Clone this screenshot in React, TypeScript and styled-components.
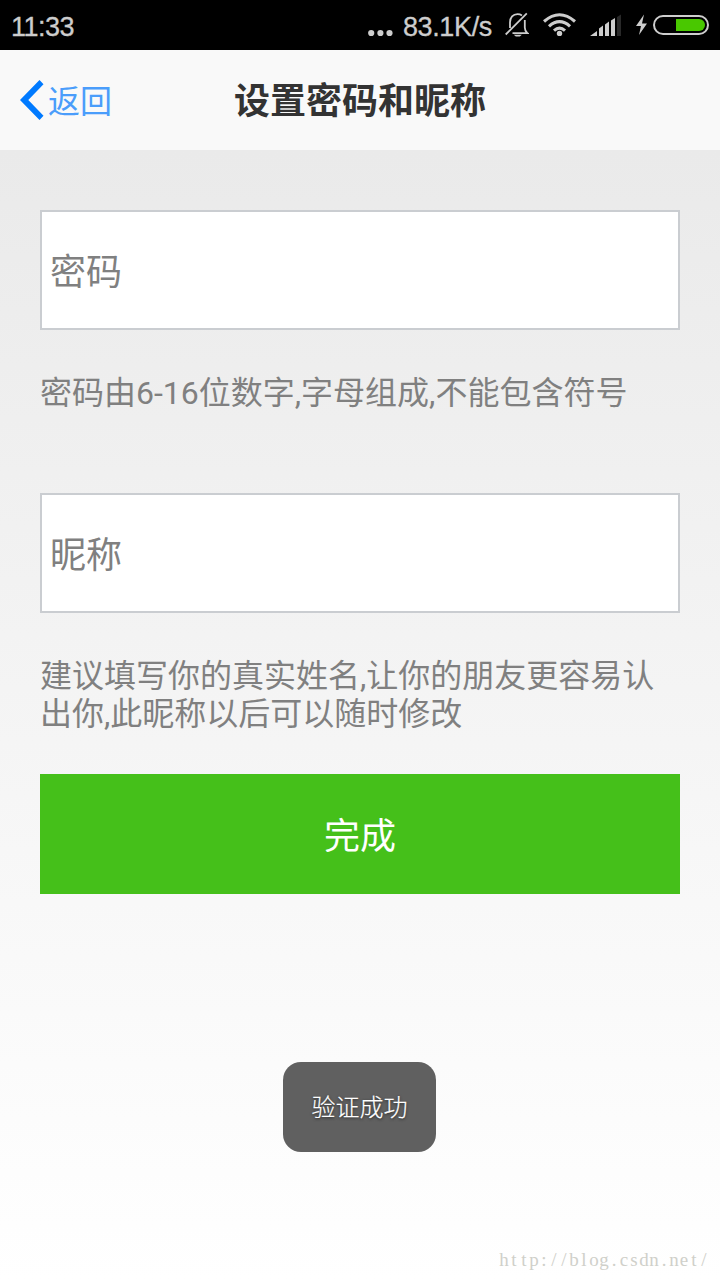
import React from "react";
import styled, { createGlobalStyle } from "styled-components";

const GlobalStyle = createGlobalStyle`
  * { box-sizing: border-box; }
  body {
    margin: 0;
    font-family: Roboto, "Noto Sans CJK SC", sans-serif;
  }
`;

const Screen = styled.div`
  position: relative;
  width: 720px;
  height: 1280px;
  overflow: hidden;
  display: flex;
  flex-direction: column;
`;

const StatusBar = styled.header`
  height: 50px;
  padding: 0 11px;
  display: flex;
  align-items: center;
  background: #000;
  color: #cdcdcd;
  font: 27px/50px "Liberation Sans", sans-serif;
  -webkit-text-stroke: 0.3px #cdcdcd;
`;

const Clock = styled.span`
  flex: 1;
  padding-top: 3px;
  letter-spacing: -0.5px;
`;

const Speed = styled.span`
  padding-top: 3px;
  margin: 0 13px 0 10px;
  letter-spacing: -0.35px;
`;

const StatusIcon = styled.svg<{ $gap?: number }>`
  display: block;
  flex: none;
  margin-right: ${({ $gap = 0 }) => $gap}px;
`;

const NavBar = styled.nav`
  height: 100px;
  padding-left: 20px;
  display: grid;
  grid-template-columns: 214px 252px 1fr;
  align-items: center;
  background: #f9f9f9;
`;

const BackButton = styled.button`
  display: flex;
  align-items: center;
  gap: 4px;
  padding: 0;
  border: 0;
  background: none;
  color: #4a9dfb;
  font: 32px/40px Roboto, "Noto Sans CJK SC", sans-serif;
`;

const BackLabel = styled.span`
  padding-top: 3px;
`;

const Title = styled.h1`
  margin: 0;
  padding-top: 3px;
  color: #333;
  font-size: 36px;
  line-height: 40px;
  font-weight: 700;
  white-space: nowrap;
`;

const Form = styled.main`
  flex: 1;
  display: flex;
  flex-direction: column;
  padding: 60px 40px 0;
  background: linear-gradient(#eaeaea, #fff);
`;

const Field = styled.input`
  display: block;
  flex: none;
  width: 100%;
  height: 120px;
  padding: 5px 8px 0;
  border: 2px solid #cacdd1;
  border-radius: 0;
  outline: 0;
  background: #fff;
  color: #333;
  font: 36px Roboto, "Noto Sans CJK SC", sans-serif;
  &::placeholder {
    color: #808080;
    opacity: 1;
  }
`;

const Hint = styled.p<{ $after: number }>`
  margin: 44px 0 ${({ $after }) => $after}px;
  color: #808080;
  font-size: 32px;
  line-height: 38px;
  white-space: nowrap;
`;

const Submit = styled.button`
  flex: none;
  height: 120px;
  padding: 0 0 2px;
  border: 0;
  background: #45c01a;
  color: #fff;
  font: 36px Roboto, "Noto Sans CJK SC", sans-serif;
`;

const Toast = styled.div`
  position: absolute;
  left: 283px;
  top: 1062px;
  width: 153px;
  height: 90px;
  border-radius: 18px;
  background: #606060;
  color: #fff;
  font-size: 24px;
  font-weight: 300;
  line-height: 93px;
  text-align: center;
  text-shadow: 0 1px 3px #222;
  -webkit-text-stroke: 0.2px #fff;
`;

const Watermark = styled.div`
  position: absolute;
  left: 499px;
  top: 1249px;
  color: #d0d0ca;
  font: 19px/22px "Liberation Serif", serif;
  white-space: nowrap;
`;

const Cell = styled.span`
  display: inline-block;
  width: 10px;
  text-align: center;
`;

export default function App() {
  return (
    <Screen>
      <GlobalStyle />
      <StatusBar>
        <Clock>11:33</Clock>
        <StatusIcon width="25" height="50" fill="#cdcdcd">
          <circle cx="3.2" cy="33" r="3.1" />
          <circle cx="12.4" cy="33" r="3.1" />
          <circle cx="21.5" cy="33" r="3.1" />
        </StatusIcon>
        <Speed>83.1K/s</Speed>
        <StatusIcon $gap={14} width="24" height="50" fill="none" stroke="#cdcdcd" strokeWidth="1.8">
          <path d="M5 28V22.5C5 17.5 8 14.2 12.5 14.2q2.5 0 4.5 1.3M19.8 20V27.5q0 3.5 2.6 5.7H7.5M.7 34.5 21.8 13.4" />
          <path d="M8.8 34.8h8l-2 1.8h-4z" fill="#cdcdcd" stroke="none" />
        </StatusIcon>
        <StatusIcon $gap={14} width="33" height="50" fill="none" stroke="#cdcdcd" strokeWidth="3.1">
          <path d="M1 21.5q15.5-13.5 31 0M6 26.3q10.5-9.3 21 0M11 30.6q5.5-5 11 0" />
          <circle cx="16.5" cy="33.4" r="2.7" fill="#cdcdcd" stroke="none" />
        </StatusIcon>
        <StatusIcon $gap={15} width="31" height="50" fill="#cdcdcd">
          <path d="M0 36l7-5v5zM9 36v-7.5l4-3V36zM15 36V24.5l4-3V36zM21 36V20.5l4-2.5v18z" />
          <path d="M27 36V17l4-2.5V36z" fill="#292929" />
        </StatusIcon>
        <StatusIcon $gap={6} width="11" height="50" fill="#cdcdcd">
          <path d="M8 14.5 0 26h5l-2 9L11 23.5H6z" />
        </StatusIcon>
        <StatusIcon width="56" height="50" fill="none">
          <rect x="1" y="16" width="54" height="18" rx="9" stroke="#cdcdcd" strokeWidth="2" />
          <path d="M23 19h23a6 6 0 0 1 0 12H23z" fill="#49c800" />
        </StatusIcon>
      </StatusBar>
      <NavBar>
        <BackButton>
          <StatusIcon width="24" height="40" viewBox="0 0 24 40">
            <path d="M19.5 0 0 20l19.5 20 4-4.2L8.3 20 23.5 4.2z" fill="#007aff" />
          </StatusIcon>
          <BackLabel>返回</BackLabel>
        </BackButton>
        <Title>设置密码和昵称</Title>
      </NavBar>
      <Form>
        <Field type="password" placeholder="密码" />
        <Hint $after={81}>密码由6-16位数字,字母组成,不能包含符号</Hint>
        <Field placeholder="昵称" />
        <Hint $after={41}>
          建议填写你的真实姓名,让你的朋友更容易认
          <br />
          出你,此昵称以后可以随时修改
        </Hint>
        <Submit>完成</Submit>
      </Form>
      <Toast>验证成功</Toast>
      <Watermark>
        {Array.from("http://blog.csdn.net/").map((char, i) => (
          <Cell key={i}>{char}</Cell>
        ))}
      </Watermark>
    </Screen>
  );
}
